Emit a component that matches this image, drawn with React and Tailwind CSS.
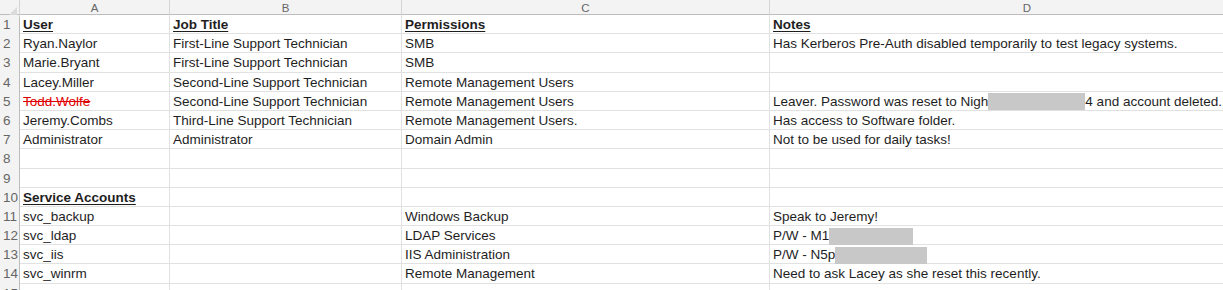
export default function App() {
  const rows = [
    { a: "User", b: "Job Title", c: "Permissions", d: "Notes", head: true },
    { a: "Ryan.Naylor", b: "First-Line Support Technician", c: "SMB", d: "Has Kerberos Pre-Auth disabled temporarily to test legacy systems." },
    { a: "Marie.Bryant", b: "First-Line Support Technician", c: "SMB", d: "" },
    { a: "Lacey.Miller", b: "Second-Line Support Technician", c: "Remote Management Users", d: "" },
    { a: "Todd.Wolfe", b: "Second-Line Support Technician", c: "Remote Management Users", d: "leaver", strike: true },
    { a: "Jeremy.Combs", b: "Third-Line Support Technician", c: "Remote Management Users.", d: "Has access to Software folder." },
    { a: "Administrator", b: "Administrator", c: "Domain Admin", d: "Not to be used for daily tasks!" },
    { a: "", b: "", c: "", d: "" },
    { a: "", b: "", c: "", d: "" },
    { a: "Service Accounts", b: "", c: "", d: "", head: true },
    { a: "svc_backup", b: "", c: "Windows Backup", d: "Speak to Jeremy!" },
    { a: "svc_ldap", b: "", c: "LDAP Services", d: "pw1" },
    { a: "svc_iis", b: "", c: "IIS Administration", d: "pw2" },
    { a: "svc_winrm", b: "", c: "Remote Management", d: "Need to ask Lacey as she reset this recently." },
    { a: "", b: "", c: "", d: "" },
  ];

  const renderD = (d) => {
    if (d === "leaver")
      return (
        <span className="flex items-center">
          <span>Leaver. Password was reset to Nigh</span>
          <span className="inline-block w-[97px] h-[17px] bg-[#c8c8c8]" />
          <span>4 and account deleted.</span>
        </span>
      );
    if (d === "pw1")
      return (
        <span className="flex items-center">
          <span>P/W - M1</span>
          <span className="inline-block w-[84px] h-[17px] bg-[#c8c8c8]" />
        </span>
      );
    if (d === "pw2")
      return (
        <span className="flex items-center">
          <span>P/W - N5p</span>
          <span className="inline-block w-[92px] h-[17px] bg-[#c8c8c8]" />
        </span>
      );
    return d;
  };

  const cell = "h-full border-r border-[#e1e1e1] pl-[3px] whitespace-nowrap overflow-visible flex items-center";
  const cols = "grid grid-cols-[20px_150px_232px_368px_514px]";

  return (
    <div
      className="w-[1223px] h-[290px] overflow-hidden bg-white text-[#1e1e1e] text-[13.5px]"
      style={{ fontFamily: '"Liberation Sans", Arial, sans-serif' }}
    >
      <div className={cols + " w-[1284px] h-[15px] bg-[#f3f3f3] border-b border-[#bdbdbd] text-[11.5px] text-[#666]"}>
        <div className="border-r border-[#d4d4d4] relative">
          <div className="absolute right-[2px] bottom-[2px] w-0 h-0 border-l-[8px] border-l-transparent border-b-[8px] border-b-[#dadada]" />
        </div>
        <div className="border-r border-[#d4d4d4] flex items-center justify-center">A</div>
        <div className="border-r border-[#d4d4d4] flex items-center justify-center">B</div>
        <div className="border-r border-[#d4d4d4] flex items-center justify-center">C</div>
        <div className="flex items-center justify-center">D</div>
      </div>
      {rows.map((r, i) => (
        <div
          key={i}
          className={cols + " w-[1284px] h-[19.2px] border-b border-[#e1e1e1]"}
        >
          <div className="h-full bg-[#f3f3f3] border-r border-[#bdbdbd] text-[#666] text-[13.5px] flex items-center pl-[3px]">
            {i + 1}
          </div>
          <div className={cell}>
            <span
              className={
                (r.head ? "font-bold underline underline-offset-2 " : "") +
                (r.strike ? "text-[#e00000] line-through" : "")
              }
            >
              {r.a}
            </span>
          </div>
          <div className={cell}>
            <span className={r.head && r.b ? "font-bold underline underline-offset-2" : ""}>{r.b}</span>
          </div>
          <div className={cell}>
            <span className={r.head && r.c ? "font-bold underline underline-offset-2" : ""}>{r.c}</span>
          </div>
          <div className={cell + " border-r-0"}>
            <span className={r.head && r.d ? "font-bold underline underline-offset-2" : ""}>{renderD(r.d)}</span>
          </div>
        </div>
      ))}
    </div>
  );
}
